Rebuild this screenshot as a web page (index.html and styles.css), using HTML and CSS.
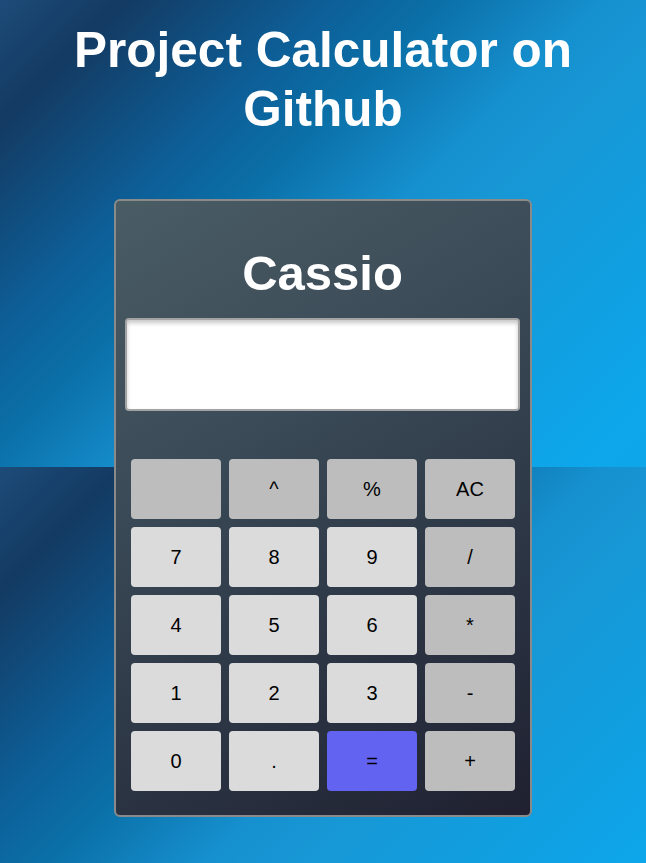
FILE: index.html
```html
<!DOCTYPE html>
<html lang="en">
<head>
<meta charset="utf-8">
<title>Project Calculator on Github</title>
<link rel="stylesheet" href="styles.css">
</head>
<body class="page">
  <h1 class="page-title">Project Calculator on Github</h1>
  <main class="calculator">
    <h2 class="calc-brand">Cassio</h2>
    <input class="calc-display" type="text" readonly>
    <div class="calc-keys">
      <button class="key key-op"></button>
      <button class="key key-op">^</button>
      <button class="key key-op">%</button>
      <button class="key key-op">AC</button>
      <button class="key key-num">7</button>
      <button class="key key-num">8</button>
      <button class="key key-num">9</button>
      <button class="key key-op">/</button>
      <button class="key key-num">4</button>
      <button class="key key-num">5</button>
      <button class="key key-num">6</button>
      <button class="key key-op">*</button>
      <button class="key key-num">1</button>
      <button class="key key-num">2</button>
      <button class="key key-num">3</button>
      <button class="key key-op">-</button>
      <button class="key key-num">0</button>
      <button class="key key-num">.</button>
      <button class="key key-eq">=</button>
      <button class="key key-op">+</button>
    </div>
  </main>
</body>
</html>
```

FILE: styles.css
```css
* { box-sizing: border-box; }

.page {
  margin: 0;
  min-height: 100vh;
  font-family: "Liberation Sans", Arial, sans-serif;
  background-image: linear-gradient(135deg, #1d4b79 0%, #133a62 11%, #0d5f98 30%, #0b70a8 40%, #1690cf 54%, #1897d5 62%, #0fa0e2 82%, #0ea7ec 95%, #0ea5e9 100%);
  background-size: 100% 467px;
  background-repeat: repeat-y;
}

.page-title {
  margin: 20px 0 0;
  padding: 0 40px;
  text-align: center;
  color: #fff;
  font-size: 49.5px;
  line-height: 59px;
  font-weight: 700;
}

.calculator {
  width: 418px;
  margin: 61px auto 0;
  padding: 44px 10px 24px 9px;
  border: 2px solid #8a8a8a;
  border-radius: 6px;
  background: linear-gradient(150deg, #4a5c64 0%, #3b4b58 35%, #2b3443 70%, #1f2030 100%);
}

.calc-brand {
  margin: 0 0 17px;
  text-align: center;
  color: #fff;
  font-size: 49px;
  line-height: 56px;
  font-weight: 700;
}

.calc-display {
  display: block;
  width: 100%;
  height: 93px;
  margin: 0 0 48px;
  border: 2px solid #a3a3a3;
  border-radius: 4px;
  background: #fff;
  box-shadow: inset 0 3px 4px rgba(0, 0, 0, 0.22);
  outline: none;
}

.calc-keys {
  display: grid;
  grid-template-columns: repeat(4, 90px);
  grid-auto-rows: 60px;
  gap: 8px;
  justify-content: center;
  margin-left: 1px;
}

.key {
  border: none;
  border-radius: 4px;
  font-family: "Liberation Sans", Arial, sans-serif;
  font-size: 20px;
  color: #000;
  padding: 0;
}

.key-op { background: #bdbdbd; }
.key-num { background: #dbdbdb; }
.key-eq { background: #6363f2; }
```
